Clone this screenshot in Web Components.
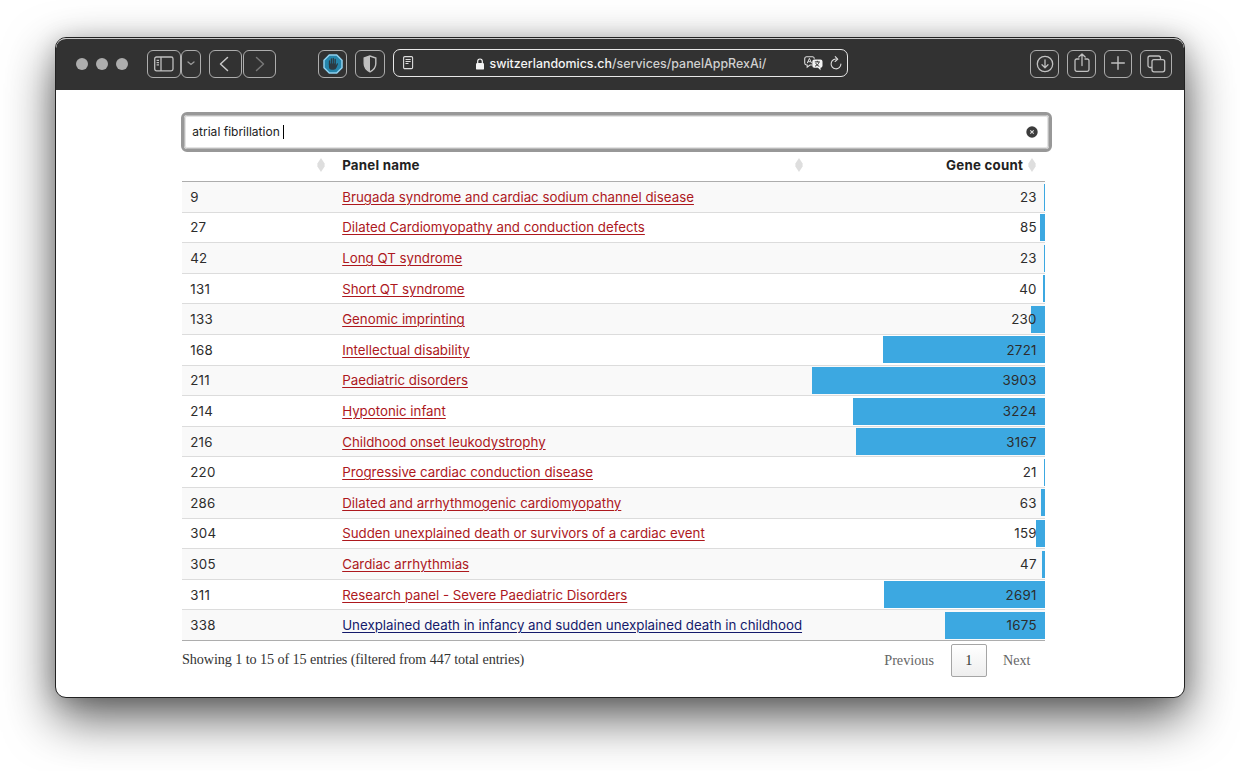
<!DOCTYPE html>
<html lang="en">
<head>
<meta charset="utf-8">
<title>PanelAppRex Ai</title>
<style>
body{margin:0;background:#fff;height:771px;overflow:hidden;box-sizing:border-box;padding:37px 55px}
</style>
</head>
<body>
<browser-window>
  <browser-toolbar slot="toolbar"></browser-toolbar>
  <panel-page></panel-page>
</browser-window>

<script>
const define = (name, html, init) => customElements.define(name, class extends HTMLElement {
  connectedCallback() {
    if (this.shadowRoot) return;
    const t = document.createElement('template');
    t.innerHTML = html;
    this.attachShadow({mode: 'open'}).append(t.content.cloneNode(true));
    if (init) init(this, this.shadowRoot);
  }
});

define('browser-window', `
<style>
:host{display:flex;flex-direction:column;box-sizing:border-box;width:1130px;height:661px;border:1px solid #222;border-radius:11px;overflow:hidden;background:#fff;
 box-shadow:0 20px 50px rgba(0,0,0,.64),0 2px 22px rgba(0,0,0,.17)}
</style>
<slot name="toolbar"></slot><slot></slot>`);

define('tool-button', `
<style>
:host{display:flex;box-sizing:border-box;height:28px;width:var(--w,30px);border:1px solid #adadad;border-radius:6px;align-items:center;justify-content:center;color:#c0c0c0}
</style>
<slot></slot>`);

define('address-bar', `
<style>
:host{display:flex;box-sizing:border-box;width:455px;height:28px;margin-bottom:2px;border:1px solid #e8e8e8;border-radius:7px;align-items:center;padding:0 5px 0 9px;color:#f4f4f4;font:500 12.400px/1 Inter,"Liberation Sans",sans-serif}
.url{flex:1;display:flex;align-items:center;justify-content:center;gap:6px;padding:4px 0 0 24px}
.url svg{margin-bottom:1px}
i{font-style:normal;color:#d0d0d0}
svg{display:block;flex:none}
</style>
<svg width="11" height="14" viewBox="0 0 11 14" fill="none" stroke="#ddd"><rect x=".6" y=".6" width="9" height="12" rx="1.2" stroke-width="1.1"/><path d="M2.5 3.5h5.2M2.5 5.5h5.2M2.5 7.5h3"/></svg>
<div class="url"><svg width="8" height="12" viewBox="0 0 8 12"><rect y="5" width="8" height="6.6" rx="1.2" fill="#f4f4f4"/><path d="M1.7 5.5V3.3a2.3 2.3 0 0 1 4.6 0v2.2" fill="none" stroke="#f4f4f4" stroke-width="1.2"/></svg><span>switzerlandomics.ch<i>/services/panelAppRexAi/</i></span></div>
<svg style="margin-top:2px" width="20" height="15" viewBox="0 0 20 15"><path d="M8 9H6L3.2 11.2V9H2.6A1.9 1.9 0 0 1 .7 7.1V2.7A1.9 1.9 0 0 1 2.6.8h5.8a1.9 1.9 0 0 1 1.9 1.9" fill="none" stroke="#ddd" stroke-width="1.1"/><path d="M3.2 7.2 5.4 2.4 7.6 7.2M4 5.7h2.8" fill="none" stroke="#ddd"/><path d="M10.3 3.6h6.2a2 2 0 0 1 2 2v4.2a2 2 0 0 1-2 2v2.4L14 11.8h-3.7a2 2 0 0 1-2-2V5.600a2 2 0 0 1 2-2z" fill="#f4f4f4"/><path d="M10.800 5.900h5M13.300 4.800v1.100M15 6.200c-.5 2-2 3.500-4 4M11.800 7.100c.6 1.500 1.800 2.600 3.500 3.200" fill="none" stroke="#323232"/></svg>
<svg style="margin-left:6px" width="12" height="14" viewBox="0 0 12 14" fill="none" stroke="#ddd" stroke-width="1.1" stroke-linecap="round"><path d="M7.300 3.200A4.900 4.900 0 1 0 10.900 8"/><path d="M5.300 .700 7.700 3.300 5.100 5.500"/></svg>`);

define('browser-toolbar', `
<style>
:host{display:flex;flex:none;box-sizing:border-box;height:52px;background:#323232;border-top:1px solid #c9c9c9;border-radius:10px 10px 0 0;align-items:center;padding:0 12px 2px 20px}
.dots{display:flex;gap:8px;margin-right:19px}
.dots b{width:12px;height:12px;border-radius:50%;background:#adadad}
svg{display:block}
.sp{flex:1}
</style>
<div class="dots"><b></b><b></b><b></b></div>
<tool-button style="--w:34px"><svg width="20" height="16" viewBox="0 0 20 16" fill="none" stroke="#c0c0c0" stroke-width="1.300"><rect x=".7" y="1" width="18.300" height="13.800" rx="1.800"/><path d="M7 1v14"/><path d="M2.600 4.300H5M2.600 6.600H5M2.600 8.900H5" stroke-width="1.200"/></svg></tool-button>
<tool-button style="--w:20px"><svg width="8" height="5" viewBox="0 0 8 5" fill="none" stroke="#999" stroke-width="1.300" stroke-linecap="round"><path d="M1 1l3 2.500L7 1"/></svg></tool-button>
<tool-button style="--w:33px;margin-left:8px"><svg style="margin-right:3px" width="10" height="16" viewBox="0 0 10 16" fill="none" stroke="#c8c8c8" stroke-width="1.500" stroke-linecap="round" stroke-linejoin="round"><path d="M8.500 1.500 1.500 8 8.500 14.500"/></svg></tool-button>
<tool-button style="--w:33px;margin-left:1px"><svg width="10" height="16" viewBox="0 0 10 16" fill="none" stroke="#777" stroke-width="1.500" stroke-linecap="round" stroke-linejoin="round"><path d="M1.500 1.500 8.500 8 1.500 14.500"/></svg></tool-button>
<tool-button style="--w:29px;margin-left:42px"><svg width="20" height="20" viewBox="0 0 20 20"><path d="M6.300 1h7.400L19 6.300v7.400L13.700 19H6.300L1 13.700V6.300z" fill="#2585ab" stroke="#8fd0ee" stroke-width="1.500"/><path d="M6.500 10.600V7M8.400 10V5M10.300 10V4.400M12.200 10V5.300" stroke="#2c3a42" stroke-width="1.300" stroke-linecap="round"/><path d="M5.900 9.500h6.900v1.900l1.200-1.800q.9-.7 1.100.2l-1.500 3.700q-.9 2.300-3.100 2.300h-1.700q-2.800 0-2.900-3.300z" fill="#2c3a42"/></svg></tool-button>
<tool-button style="margin-left:8px"><svg width="14" height="18" viewBox="0 0 14 18"><path d="M7 1 1.200 3v5.500C1.200 12.500 4 15.300 7 16.800c3-1.500 5.800-4.300 5.800-8.300V3z" fill="none" stroke="#c0c0c0" stroke-width="1.400"/><path d="M7 1 1.200 3v5.500C1.200 12.500 4 15.300 7 16.800z" fill="#c0c0c0"/></svg></tool-button>
<address-bar style="margin-left:8px"></address-bar>
<div class="sp"></div>
<tool-button style="--w:29px"><svg width="18" height="18" viewBox="0 0 18 18" fill="none" stroke="#c0c0c0" stroke-width="1.300" stroke-linecap="round" stroke-linejoin="round"><circle cx="9" cy="9" r="7.700"/><path d="M9 5v7.500M6 9.700l3 3 3-3"/></svg></tool-button>
<tool-button style="--w:29px;margin-left:8px"><svg style="margin-bottom:2px" width="16" height="20" viewBox="0 0 16 20" fill="none" stroke="#c0c0c0" stroke-width="1.300" stroke-linecap="round" stroke-linejoin="round"><path d="M5 6H2.700A1.700 1.700 0 0 0 1 7.700v8.900a1.700 1.700 0 0 0 1.700 1.700h10.600a1.700 1.700 0 0 0 1.700-1.700V7.700A1.700 1.700 0 0 0 13.300 6H11M8 12.500V1.200M4.800 4 8 1l3.200 3"/></svg></tool-button>
<tool-button style="--w:28px;margin-left:8px"><svg style="margin-bottom:1px" width="14" height="14" viewBox="0 0 14 14" fill="none" stroke="#c0c0c0" stroke-width="1.400" stroke-linecap="round"><path d="M7 .700v12.600M.7 7h12.600"/></svg></tool-button>
<tool-button style="--w:32px;margin-left:8px"><svg width="19" height="18" viewBox="0 0 19 18" fill="none" stroke="#c0c0c0" stroke-width="1.300"><path d="M5 12.500H3a2 2 0 0 1-2-2V3a2 2 0 0 1 2-2h8.500a2 2 0 0 1 2 2v1.500"/><rect x="5" y="4.600" width="12.700" height="12.200" rx="2"/></svg></tool-button>`);

define('search-field', `
<style>
:host{display:flex;box-sizing:border-box;width:871px;height:40px;margin-left:-1px;border:3px solid #989898;border-radius:6px;background:#fff;font:12.040px/1 Inter,"Liberation Sans",sans-serif;color:#222}
div{flex:1;display:flex;align-items:center;border:1px solid #bbb;outline:1px solid #e4e4e4;outline-offset:-2px;border-radius:3px;padding:0 10px 0 7.300px}
b{width:1px;height:14px;background:#000;margin-left:3px}
svg{margin-left:auto}
</style>
<div><span>atrial fibrillation</span><b></b><svg width="12" height="12" viewBox="0 0 12 12"><circle cx="6" cy="6" r="5.700" fill="#3c3c3c"/><path d="M4.300 4.300l3.400 3.400M7.700 4.300 4.300 7.700" stroke="#ddd" stroke-width="1.100"/></svg></div>`);

define('sort-mark', `
<style>:host{display:block;width:8px;height:14px}svg{display:block}</style>
<svg width="8" height="14" viewBox="0 0 8 14" fill="#dedede"><path d="M4 0 7.600 5.500v3L4 14 .4 8.500v-3z"/></svg>`);

define('panel-row', `
<style>
:host{display:grid;grid-template-columns:152px 478px 233px;box-sizing:border-box;height:30.600px;border-bottom:1px solid var(--line,#dcdcdc);background:var(--bg,#fff);align-items:center;font:13.300px/20px Inter,"Liberation Sans",sans-serif;color:#2c2c2c}
span{padding:0 8.200px;white-space:nowrap}
a{color:var(--link,#ad181d);text-decoration:underline;text-underline-offset:1.500px;text-decoration-thickness:1px}
.id,.n{letter-spacing:.3px}
.n{text-align:right;align-self:stretch;display:flex;align-items:center;justify-content:flex-end;background:linear-gradient(#3ca8e1,#3ca8e1) no-repeat right 1.500px/var(--bar) 27px}
</style>
<span class="id"></span><span><a></a></span><span class="n"></span>`, (el, r) => {
  r.querySelector('.id').textContent = el.getAttribute('number');
  r.querySelector('a').textContent = el.getAttribute('name');
  r.querySelector('.n').textContent = el.getAttribute('genes');
  r.querySelector('.n').style.setProperty('--bar', el.getAttribute('bar') + 'px');
});

define('panel-table', `
<style>
:host{display:block;width:863px}
header{display:grid;grid-template-columns:152px 478px 233px;box-sizing:border-box;height:30px;padding-bottom:3px;border-bottom:1px solid #adadad;font:700 13.300px/20px Inter,"Liberation Sans",sans-serif;letter-spacing:.23px;color:#222;align-items:center}
header>div{display:flex;align-items:center;padding:0 9px 0 8.200px;justify-content:space-between}
header>.r{justify-content:flex-end;gap:5px}
</style>
<header><div><i></i><sort-mark></sort-mark></div><div><span>Panel name</span><sort-mark></sort-mark></div><div class="r"><span>Gene count</span><sort-mark></sort-mark></div></header>
<div id="rows"></div>`, (el, r) => {
  const rows = [
    [9,'Brugada syndrome and cardiac sodium channel disease',23,1],
    [27,'Dilated Cardiomyopathy and conduction defects',85,5],
    [42,'Long QT syndrome',23,1],
    [131,'Short QT syndrome',40,2],
    [133,'Genomic imprinting',230,14],
    [168,'Intellectual disability',2721,162],
    [211,'Paediatric disorders',3903,233],
    [214,'Hypotonic infant',3224,192],
    [216,'Childhood onset leukodystrophy',3167,189],
    [220,'Progressive cardiac conduction disease',21,1],
    [286,'Dilated and arrhythmogenic cardiomyopathy',63,4],
    [304,'Sudden unexplained death or survivors of a cardiac event',159,9],
    [305,'Cardiac arrhythmias',47,3],
    [311,'Research panel - Severe Paediatric Disorders',2691,161],
    [338,'Unexplained death in infancy and sudden unexplained death in childhood',1675,100]];
  rows.forEach(([number, name, genes, bar], i) => {
    const row = document.createElement('panel-row');
    Object.entries({number, name, genes, bar}).forEach(([k, v]) => row.setAttribute(k, v));
    if (i % 2 === 0) row.style.setProperty('--bg', '#f9f9f9');
    if (i === rows.length - 1) { row.style.setProperty('--line', '#adadad'); row.style.setProperty('--link', '#141a6b'); }
    r.querySelector('#rows').append(row);
  });
});

define('table-footer', `
<style>
:host{display:flex;width:863px;height:39px;align-items:center;font:14.200px/20px "Liberation Serif",serif;color:#333}
.s{letter-spacing:-.09px;padding-bottom:2px}
.p{margin-left:auto;display:flex;align-items:center;color:#666;padding-right:14.500px}
b{font-weight:400;box-sizing:border-box;width:36px;height:33px;border:1px solid #a5a5a5;border-radius:2px;background:linear-gradient(#fff,#eee);color:#333;display:flex;align-items:center;justify-content:center;margin:0 16px 0 17px}
</style>
<span class="s">Showing 1 to 15 of 15 entries (filtered from 447 total entries)</span><div class="p"><span>Previous</span><b>1</b><span>Next</span></div>`);

define('panel-page', `
<style>:host{display:block;padding:22px 0 0 126px}</style>
<search-field></search-field><panel-table></panel-table><table-footer></table-footer>`);
</script>
</body>
</html>
